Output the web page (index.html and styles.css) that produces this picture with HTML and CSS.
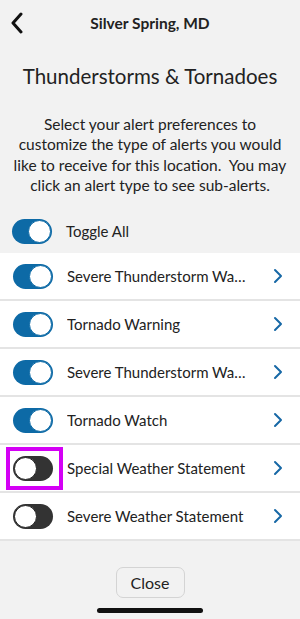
FILE: index.html
```html
<!DOCTYPE html>
<html lang="en">
<head>
    <meta charset="UTF-8">
    <meta name="viewport" content="width=device-width, initial-scale=1.0">
    <title>Alert Preferences</title>
    <link rel="stylesheet" href="styles.css">
</head>
<body>

    <div class="topo">
        <svg class="voltar" width="14" height="22" viewBox="0 0 14 22">
            <path d="M11 2 L3 11 L11 20" fill="none" stroke="#111" stroke-width="3" stroke-linecap="round" stroke-linejoin="round"/>
        </svg>
        <div class="local">Silver Spring, MD</div>
    </div>

    <h1 class="titulo">Thunderstorms &amp; Tornadoes</h1>

    <p class="descricao">Select your alert preferences to<br>customize the type of alerts you would<br>like to receive for this location.&nbsp; You may<br>click an alert type to see sub-alerts.</p>

    <div class="toggle-todos">
        <span class="chave ligada"></span>
        <span>Toggle All</span>
    </div>

    <ul class="lista">
        <li class="item">
            <span class="chave ligada"></span>
            <span class="nome">Severe Thunderstorm Warning</span>
            <svg class="seta" width="10" height="16" viewBox="0 0 10 16"><path d="M2 2 L8 8 L2 14" fill="none" stroke="#1768a6" stroke-width="2" stroke-linecap="round" stroke-linejoin="round"/></svg>
        </li>
        <li class="item">
            <span class="chave ligada"></span>
            <span class="nome">Tornado Warning</span>
            <svg class="seta" width="10" height="16" viewBox="0 0 10 16"><path d="M2 2 L8 8 L2 14" fill="none" stroke="#1768a6" stroke-width="2" stroke-linecap="round" stroke-linejoin="round"/></svg>
        </li>
        <li class="item">
            <span class="chave ligada"></span>
            <span class="nome">Severe Thunderstorm Watch</span>
            <svg class="seta" width="10" height="16" viewBox="0 0 10 16"><path d="M2 2 L8 8 L2 14" fill="none" stroke="#1768a6" stroke-width="2" stroke-linecap="round" stroke-linejoin="round"/></svg>
        </li>
        <li class="item">
            <span class="chave ligada"></span>
            <span class="nome">Tornado Watch</span>
            <svg class="seta" width="10" height="16" viewBox="0 0 10 16"><path d="M2 2 L8 8 L2 14" fill="none" stroke="#1768a6" stroke-width="2" stroke-linecap="round" stroke-linejoin="round"/></svg>
        </li>
        <li class="item">
            <span class="destaque"><span class="chave"></span></span>
            <span class="nome">Special Weather Statement</span>
            <svg class="seta" width="10" height="16" viewBox="0 0 10 16"><path d="M2 2 L8 8 L2 14" fill="none" stroke="#1768a6" stroke-width="2" stroke-linecap="round" stroke-linejoin="round"/></svg>
        </li>
        <li class="item">
            <span class="chave"></span>
            <span class="nome">Severe Weather Statement</span>
            <svg class="seta" width="10" height="16" viewBox="0 0 10 16"><path d="M2 2 L8 8 L2 14" fill="none" stroke="#1768a6" stroke-width="2" stroke-linecap="round" stroke-linejoin="round"/></svg>
        </li>
    </ul>

    <div class="rodape">
        <button class="fechar">Close</button>
    </div>

    <div class="barra-home"></div>

</body>
</html>
```

FILE: styles.css
```css
body {
    font-family: Lato, "Open Sans", sans-serif;
    margin: 0;
    padding: 0;
    background-color: #f2f2f2;
    color: #222;
    width: 300px;
    height: 619px;
    overflow: hidden;
}
.topo {
    height: 46px;
    display: flex;
    align-items: center;
    justify-content: center;
    position: relative;
}
.voltar {
    position: absolute;
    left: 10px;
    top: 12px;
}
.local {
    font-size: 15.5px;
    font-weight: bold;
    color: #222;
}
.titulo {
    font-size: 20.5px;
    font-weight: normal;
    text-align: center;
    margin: 16px 0 0 0;
    line-height: 28px;
}
.descricao {
    font-size: 15.5px;
    line-height: 20.3px;
    text-align: center;
    margin: 24px 0 0 0;
    white-space: nowrap;
}
.toggle-todos {
    display: flex;
    align-items: center;
    gap: 14px;
    height: 44px;
    padding: 0 12px;
    margin-top: 14px;
    font-size: 15px;
}
.lista {
    list-style: none;
    margin: 0;
    padding: 0;
    background-color: #fff;
}
.item {
    display: flex;
    align-items: center;
    height: 46px;
    padding: 0 17px 0 13px;
    border-bottom: 2px solid #e4e4e4;
    font-size: 15px;
}
.nome {
    flex: 1;
    margin-left: 14px;
    margin-right: 24px;
    white-space: nowrap;
    overflow: hidden;
    text-overflow: ellipsis;
}
.seta {
    flex-shrink: 0;
}
.chave {
    display: inline-block;
    position: relative;
    width: 40px;
    height: 25px;
    border-radius: 13px;
    background-color: #333;
    flex-shrink: 0;
}
.chave::after {
    content: "";
    position: absolute;
    left: 1px;
    top: 1px;
    width: 21px;
    height: 21px;
    border-radius: 50%;
    background-color: #fff;
    border: 1px solid #222;
}
.chave.ligada {
    background-color: #0d6aa6;
}
.chave.ligada::after {
    left: auto;
    right: 1px;
    border-color: #0d6aa6;
}
.destaque {
    display: inline-flex;
    padding: 5px 6px 5px 3px;
    margin: 0 -10px 0 -7px;
    border: 4px solid #d400f5;
    flex-shrink: 0;
}
.rodape {
    display: flex;
    justify-content: center;
    padding-top: 26px;
}
.fechar {
    font-family: Lato, "Open Sans", sans-serif;
    font-size: 16px;
    color: #222;
    width: 69px;
    height: 31px;
    background-color: #f2f2f2;
    border: 1.5px solid #d4d4d4;
    border-radius: 7px;
}
.barra-home {
    width: 106px;
    height: 5px;
    border-radius: 3px;
    background-color: #111;
    margin: 10px auto 0 auto;
}
```
